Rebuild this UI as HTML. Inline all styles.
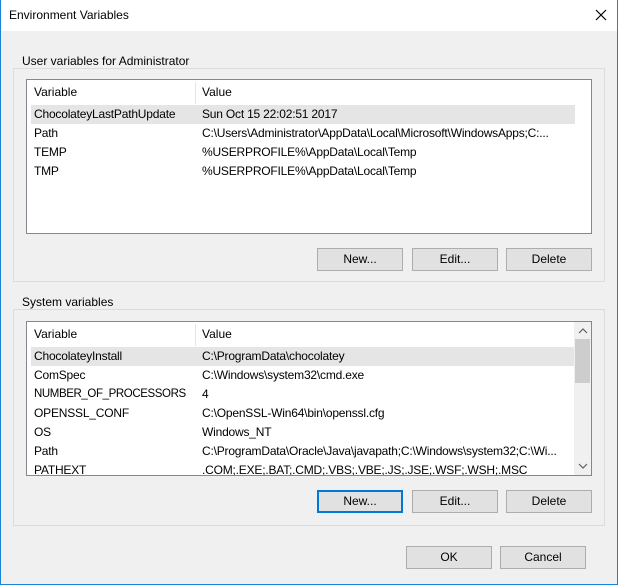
<!DOCTYPE html><html><head><style>
*{margin:0;padding:0;box-sizing:border-box}
body{width:618px;height:585px;background:#f0f0f0;font-family:"Liberation Sans",sans-serif;font-size:12px;color:#000;position:relative;overflow:hidden}
.a{position:absolute}
.title{left:0;top:0;width:618px;height:31px;background:#fff}
.gb{border:1px solid #dcdcdc}
.lbl{background:#f0f0f0;padding:0 3px}
.list{background:#fff;border:1px solid #828790;overflow:hidden}
.row{position:absolute;left:4px;height:19px;line-height:19px;white-space:nowrap;letter-spacing:-0.2px}
.row span{position:absolute;left:3px}
.row span+span{left:171px}
.hdr{position:absolute;left:0;top:0;height:24px;line-height:24px;width:100%}
.btn{background:#e1e1e1;border:1px solid #adadad;text-align:center;line-height:21px;height:23px;width:86px}
</style></head><body>
<div class="a title"><span class="a" style="left:9px;top:8px">Environment Variables</span>
<svg class="a" style="left:595px;top:9px" width="12" height="12"><path d="M1 1L11 11M11 1L1 11" stroke="#000" stroke-width="1.2"/></svg></div>
<div class="a" style="left:0;top:0;width:1px;height:585px;background:#1883d7"></div>
<div class="a" style="right:0;top:0;width:1px;height:585px;background:#1883d7"></div>
<div class="a" style="left:0;bottom:0;width:618px;height:1px;background:#1883d7"></div>

<div class="a gb" style="left:13px;top:68px;width:592px;height:214px"></div>
<span class="a lbl" style="left:19px;top:54px">User variables for Administrator</span>
<div class="a list" style="left:26px;top:79px;width:566px;height:155px">
<div class="hdr"><span class="a" style="left:7px">Variable</span><div class="a" style="left:168px;top:2px;width:1px;height:22px;background:#e5e5e5"></div><span class="a" style="left:175px">Value</span></div>
<div class="row" style="top:25px;width:544px;background:#e5e5e5"><span>ChocolateyLastPathUpdate</span><span>Sun Oct 15 22:02:51 2017</span></div>
<div class="row" style="top:44px"><span>Path</span><span>C:\Users\Administrator\AppData\Local\Microsoft\WindowsApps;C:...</span></div>
<div class="row" style="top:63px"><span>TEMP</span><span>%USERPROFILE%\AppData\Local\Temp</span></div>
<div class="row" style="top:82px"><span>TMP</span><span>%USERPROFILE%\AppData\Local\Temp</span></div>
</div>
<div class="a btn" style="left:317px;top:248px">New...</div>
<div class="a btn" style="left:412px;top:248px">Edit...</div>
<div class="a btn" style="left:506px;top:248px">Delete</div>

<div class="a gb" style="left:13px;top:309px;width:592px;height:217px"></div>
<span class="a lbl" style="left:19px;top:295px">System variables</span>
<div class="a list" style="left:26px;top:321px;width:566px;height:155px">
<div class="hdr"><span class="a" style="left:7px">Variable</span><div class="a" style="left:168px;top:2px;width:1px;height:22px;background:#e5e5e5"></div><span class="a" style="left:175px">Value</span></div>
<div class="row" style="top:25px;width:544px;background:#e5e5e5"><span>ChocolateyInstall</span><span>C:\ProgramData\chocolatey</span></div>
<div class="row" style="top:44px"><span>ComSpec</span><span>C:\Windows\system32\cmd.exe</span></div>
<div class="row" style="top:63px"><span style="font-size:11.5px;letter-spacing:-0.4px">NUMBER_OF_PROCESSORS</span><span>4</span></div>
<div class="row" style="top:82px"><span>OPENSSL_CONF</span><span>C:\OpenSSL-Win64\bin\openssl.cfg</span></div>
<div class="row" style="top:101px"><span>OS</span><span>Windows_NT</span></div>
<div class="row" style="top:120px"><span>Path</span><span>C:\ProgramData\Oracle\Java\javapath;C:\Windows\system32;C:\Wi...</span></div>
<div class="row" style="top:139px"><span>PATHEXT</span><span>.COM;.EXE;.BAT;.CMD;.VBS;.VBE;.JS;.JSE;.WSF;.WSH;.MSC</span></div>
<div class="a" style="left:547px;top:0;width:17px;height:153px;background:#f0f0f0"></div>
<div class="a" style="left:548px;top:17px;width:15px;height:44px;background:#cdcdcd"></div>
<svg class="a" style="left:551px;top:6px" width="10" height="6"><path d="M1 5L5 1L9 5" fill="none" stroke="#606060" stroke-width="1.2"/></svg>
<svg class="a" style="left:551px;top:141px" width="10" height="6"><path d="M1 1L5 5L9 1" fill="none" stroke="#606060" stroke-width="1.2"/></svg>
</div>
<div class="a btn" style="left:317px;top:490px;border:2px solid #0078d7;line-height:19px">New...</div>
<div class="a btn" style="left:412px;top:490px">Edit...</div>
<div class="a btn" style="left:506px;top:490px">Delete</div>

<div class="a btn" style="left:406px;top:546px">OK</div>
<div class="a btn" style="left:500px;top:546px">Cancel</div>
</body></html>
